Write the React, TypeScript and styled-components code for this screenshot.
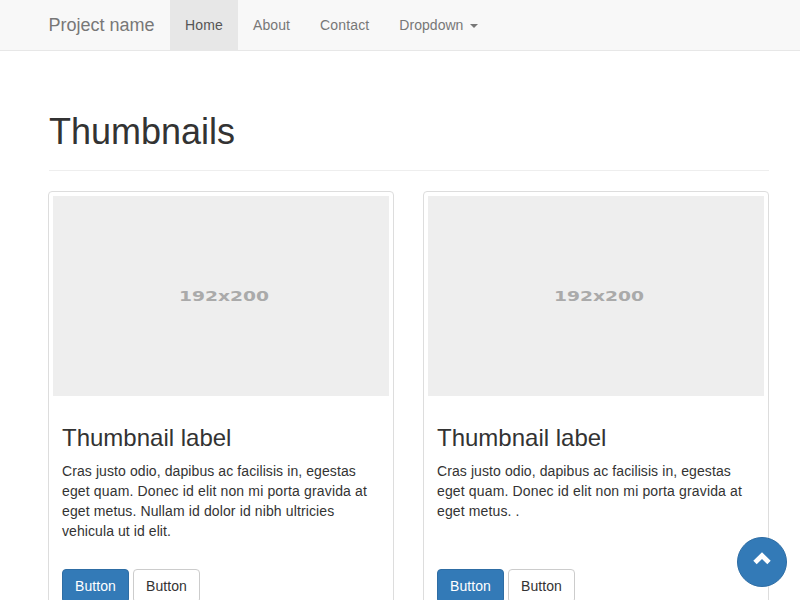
import React from 'react';
import styled, { createGlobalStyle } from 'styled-components';

const GlobalStyle = createGlobalStyle`
  * { box-sizing: border-box; }
  body {
    margin: 0;
    background: #fff;
    color: #333;
    font: 14px/20px "Liberation Sans", Arial, sans-serif;
  }
`;

const Page = styled.div`
  height: 600px;
  overflow: hidden;
`;

const Navbar = styled.nav`
  display: flex;
  height: 51px;
  padding-left: 33.5px;
  background: #f8f8f8;
  border-bottom: 1px solid #e7e7e7;
`;

const Brand = styled.a`
  width: 136.5px;
  padding: 15px;
  font-size: 18px;
  line-height: 20px;
  white-space: nowrap;
  color: #777;
`;

const NavItem = styled.a<{ $active?: boolean; $spacing?: number }>`
  height: 50px;
  padding: 15px;
  white-space: nowrap;
  letter-spacing: ${(p) => p.$spacing ?? 0.15}px;
  color: ${(p) => (p.$active ? '#555' : '#777')};
  background: ${(p) => (p.$active ? '#e7e7e7' : 'transparent')};
`;

const Caret = styled.span`
  display: inline-block;
  margin-left: 3px;
  vertical-align: middle;
  border-top: 4px solid;
  border-right: 4px solid transparent;
  border-left: 4px solid transparent;
`;

const Container = styled.main`
  width: 721px;
  margin-left: 48px;
`;

const PageHeader = styled.header`
  margin-left: 1px;
  padding: 61px 0 18px;
  border-bottom: 1px solid #eee;
`;

const Title = styled.h1`
  margin: 0;
  font-size: 36px;
  font-weight: 500;
  line-height: 40px;
`;

const Grid = styled.div`
  display: grid;
  grid-template-columns: 1fr 1fr;
  gap: 29px;
  margin-top: 20px;
`;

const Card = styled.article`
  height: 440px;
  padding: 4px;
  border: 1px solid #ddd;
  border-radius: 4px;
`;

const Placeholder = styled.svg`
  display: block;
  width: 100%;
  height: 200px;
  background: #eee;
`;

const Caption = styled.div`
  padding: 9px;
`;

const Label = styled.h3`
  margin: 20px 0 10px;
  font-size: 24px;
  font-weight: 500;
  line-height: 26px;
`;

const Description = styled.p`
  height: 80px;
  margin: 0 0 28px;
`;

const Line = styled.span<{ $spacing: number }>`
  display: block;
  white-space: nowrap;
  letter-spacing: ${(p) => p.$spacing}px;
`;

const Actions = styled.div`
  display: flex;
  gap: 4px;
`;

const Button = styled.button<{ $primary?: boolean }>`
  width: 67px;
  padding: 6px 12px;
  border: 1px solid ${(p) => (p.$primary ? '#2e6da4' : '#ccc')};
  border-radius: 4px;
  background: ${(p) => (p.$primary ? '#337ab7' : '#fff')};
  color: ${(p) => (p.$primary ? '#fff' : '#333')};
  font: inherit;
  letter-spacing: 0.08px;
`;

const ScrollTop = styled.button`
  position: fixed;
  right: 13px;
  bottom: 13px;
  display: flex;
  justify-content: center;
  align-items: flex-start;
  width: 50px;
  height: 50px;
  padding: 14px 0 0;
  border: 1px solid #2e6da4;
  border-radius: 50%;
  background: #337ab7;
`;

const Chevron = styled.svg`
  display: block;
`;

const opening = [
  { text: 'Cras justo odio, dapibus ac facilisis in, egestas', spacing: 0.09 },
  { text: 'eget quam. Donec id elit non mi porta gravida at', spacing: 0.145 },
];

const items = [
  [
    ...opening,
    { text: 'eget metus. Nullam id dolor id nibh ultricies', spacing: 0.12 },
    { text: 'vehicula ut id elit.', spacing: 0.08 },
  ],
  [...opening, { text: 'eget metus. .', spacing: 0.13 }],
];

export default function App() {
  return (
    <Page>
      <GlobalStyle />
      <Navbar>
        <Brand>Project name</Brand>
        <NavItem $active>Home</NavItem>
        <NavItem $spacing={0.1}>About</NavItem>
        <NavItem>Contact</NavItem>
        <NavItem $spacing={0.03}>Dropdown <Caret /></NavItem>
      </Navbar>
      <Container>
        <PageHeader><Title>Thumbnails</Title></PageHeader>
        <Grid>
          {items.map((lines, index) => (
            <Card key={index}>
              <Placeholder>
                <text x="126" y="105" textLength="90" lengthAdjust="spacingAndGlyphs"
                  fontFamily="DejaVu Sans" fontWeight="700" fontSize="14" fill="#aaa">192x200</text>
              </Placeholder>
              <Caption>
                <Label>Thumbnail label</Label>
                <Description>
                  {lines.map((line) => (
                    <Line key={line.text} $spacing={line.spacing}>{line.text} </Line>
                  ))}
                </Description>
                <Actions><Button $primary>Button</Button><Button>Button</Button></Actions>
              </Caption>
            </Card>
          ))}
        </Grid>
      </Container>
      <ScrollTop aria-label="Back to top">
        <Chevron width="18" height="13" viewBox="0 0 18 13">
          <path d="M9 0.2L17.7 8.8L14.3 12.2L9 7.1L3.7 12.2L0.3 8.8Z" fill="#fff" />
        </Chevron>
      </ScrollTop>
    </Page>
  );
}
